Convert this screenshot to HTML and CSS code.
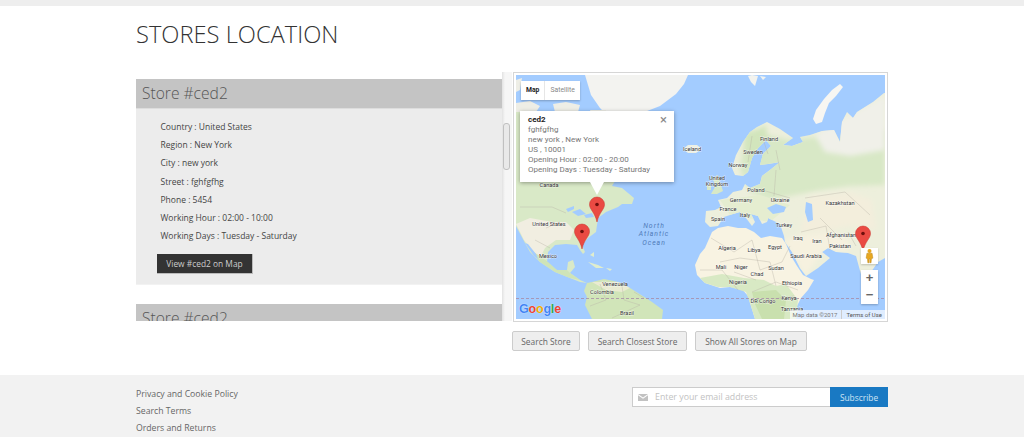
FILE: index.html
```html
<!DOCTYPE html>
<html lang="en">
<head>
<meta charset="utf-8">
<title>Stores Location</title>
<link rel="stylesheet" href="styles.css">
</head>
<body>
<div class="topbar"></div>
<main class="page">
  <h1 class="title">STORES LOCATION</h1>
  <div class="columns">
    <div class="list-wrap">
      <div class="list">
        <section class="store">
          <h2 class="store-head">Store #ced2</h2>
          <div class="store-body">
            <ul class="info">
              <li>Country : United States</li>
              <li>Region : New York</li>
              <li>City : new york</li>
              <li>Street : fghfgfhg</li>
              <li>Phone : 5454</li>
              <li>Working Hour : 02:00 - 10:00</li>
              <li>Working Days : Tuesday - Saturday</li>
            </ul>
            <button class="view-btn" type="button">View #ced2 on Map</button>
          </div>
        </section>
        <section class="store">
          <h2 class="store-head">Store #ced2</h2>
        </section>
      </div>
      <div class="scrollbar"><div class="thumb"></div></div>
    </div>
    <div class="map-col">
      <div class="map-frame">
        <div class="map">
          <svg class="map-svg" viewBox="516 75 369 244" xmlns="http://www.w3.org/2000/svg">
            <defs>
              <filter id="soft" x="-5%" y="-5%" width="110%" height="110%"><feGaussianBlur stdDeviation="0.5"/></filter>
              <filter id="softer" x="-10%" y="-10%" width="120%" height="120%"><feGaussianBlur stdDeviation="2.5"/></filter>
              <clipPath id="eurasia-clip"><path d="M884 93L873 102L857 112L853 118L847 112L842 122L840 142L834 130L822 131L810 135L800 137L803 142L792 146L783 145L793 138L780 129L767 122L757 127L750 132L743 142L736 155L732 168L735 175L743 176L748 172L752 158L758 148L766 140L771 146L763 154L760 165L768 164L780 162L770 170L762 176L760 184L750 188L745 184L742 190L733 192L727 198L718 200L721 207L715 210L706 211L705 222L710 227L718 226L724 217L733 214L740 212L746 218L752 226L755 222L751 214L758 216L762 224L767 222L768 218L780 224L784 236L785 242L792 252L800 268L806 276L818 268L830 258L822 252L828 248L836 252L848 253L856 256L862 278L865 285L871 272L878 262L885 258V93Z"/></clipPath>
            </defs>
            <rect x="516" y="75" width="369" height="244" fill="#a3ccff"/>
            <g filter="url(#soft)">
              <!-- Greenland and arctic islands -->
              <path fill="#f3f3f0" d="M585 75H688L684 84L676 94L660 106L642 113L628 128L612 120L600 108L591 95Z"/>
              <path fill="#eeeee6" d="M516 103L530 101L540 106L536 112H516ZM553 104L566 102L580 105L578 112H555ZM590 110H606V116H592ZM516 80L522 78L520 90L516 92Z"/>
              <path fill="#f3f3ee" d="M752 75L758 76L755 86L751 82L748 76ZM760 76L766 77L763 80Z"/>
              <path fill="#f7f6f2" d="M840 84L843 87L836 96L829 103L825 113L822 122L816 124L813 119L816 110L824 99L832 90Z"/>
              <path fill="#edf0e4" d="M683 149L688 145L697 145L702 149L696 153L688 153Z"/>
              <!-- North America -->
              <path fill="#d9e9c7" d="M516 112H625L622 170L612 186L622 188L634 198L632 204L622 204L618 207L606 212L598 218L596 232L588 238L582 245L585 252L583 254L580 250L577 245L566 244L555 245L548 252L547 262L551 268L557 270L567 270L568 262L573 260L575 267L570 273L580 280L587 283L580 282L570 278L555 272L540 262L530 252L525 243L517 228L516 226Z"/>
              <path fill="#f1eee1" d="M516 224L530 218L552 222L566 222L574 230L570 240L556 240L545 248L540 258L530 248L524 240Z"/>
              <path fill="#cfe4b8" d="M530 250L540 256L548 262L557 270L567 270L570 273L580 280L570 278L555 272L540 262Z"/>
              <path fill="#a3ccff" d="M572 212L580 209L586 214L578 216ZM584 215L592 213L594 217L586 218ZM566 209L574 206L574 209L568 212Z"/>
              <path fill="#a3ccff" d="M525 243L528 244L536 254L538 259L534 256Z"/>
              <path fill="#e0edcd" d="M588 262L598 265L604 268L596 268ZM606 268L612 269L610 271ZM590 255L594 252L594 257Z"/>
              <!-- South America -->
              <path fill="#d1e5b9" d="M587 283L592 282L604 279L618 282L630 288L638 293L652 302L663 310L662 319H592L585 305L587 297L584 291Z"/>
              <path fill="#eaebd2" d="M592 282L618 282L630 288L622 292L606 290Z"/>
              <!-- Africa -->
              <path fill="#f8f3e2" d="M712 232L718 228L728 226L738 228L746 228L754 232L761 238L770 236L782 238L786 244L791 256L797 266L803 275L811 279L814 280L808 290L801 298L797 306L796 319H755L751 306L748 296L742 289L730 287L720 288L705 283L697 275L695 265L700 254L705 248Z"/>
              <path fill="#d8e9c4" d="M700 278L722 274L744 278L764 280L776 286L786 284L792 292L798 300L796 319H755L751 306L746 292L730 287L718 287L705 283Z"/>
              <path fill="#c9e0ae" d="M752 292L776 290L786 300L784 319H762L755 304Z"/>
              <!-- Eurasia -->
              <g clip-path="url(#eurasia-clip)">
                <rect x="700" y="90" width="185" height="200" fill="#edefdc"/>
                <path fill="#d8e8c6" filter="url(#softer)" d="M745 130L790 140L830 135L885 130V185L850 186L820 190L790 196L770 200L750 192L740 170Z"/>
                <path fill="#f0f0e9" filter="url(#softer)" d="M815 135L885 96V150L850 156L825 152Z"/>
                <path fill="#f3eedc" filter="url(#softer)" d="M810 196L850 192L872 200L876 230L850 226L822 232L800 232Z"/>
                <path fill="#f6f1df" filter="url(#softer)" d="M784 240L806 234L830 232L850 240L846 252L825 250L815 262L806 276L796 262Z"/>
                <path fill="#d2e5bc" filter="url(#softer)" d="M746 135L766 125L768 146L756 164L748 166Z"/>
                <path fill="#e5edd0" d="M720 200L760 195L790 205L770 222L730 215Z"/>
              </g>
              <!-- Britain -->
              <path fill="#d8e8c6" d="M713 178L718 175L720 182L723 191L717 194L711 194L715 187ZM707 185L711 184L711 190L707 190Z"/>
              <!-- inland seas -->
              <path fill="#a3ccff" d="M767 208L776 204L786 207L784 212L773 214ZM806 202L812 204L813 220L808 222L805 212Z"/>
              <!-- borders -->
              <g fill="none" stroke="#b8b4a6" stroke-width="0.4">
                <path d="M520 207H552L566 213M535 240L550 248M560 222L546 228"/>
                <path d="M711 238L734 252L752 240L760 270L782 262L790 246M720 262L740 258L770 262L776 286M734 272L756 280M700 270L722 270L738 290"/>
                <path d="M752 292L776 282L798 290M766 300L794 296"/>
                <path d="M776 170L774 196M762 190L790 198M805 198L845 192L870 215M820 218L842 240M801 232L826 226L830 250M848 232L856 246"/>
                <path d="M600 284L606 300L590 306M622 286L624 300L640 305L612 318M634 292L644 298"/>
                <path d="M762 136L768 154M752 136L748 162M776 150L780 170"/>
              </g>
            </g>
            <!-- equator -->
            <line x1="516" y1="298.500" x2="885" y2="298.500" stroke="#a78aa6" stroke-width="0.8" stroke-dasharray="3 2"/>
            <g class="labels">
              <text x="549" y="187">Canada</text>
              <text x="549" y="226">United States</text>
              <text x="548" y="258">Mexico</text>
              <text x="615" y="286">Venezuela</text>
              <text x="602" y="294">Colombia</text>
              <text x="627" y="315">Brazil</text>
              <text x="692" y="151">Iceland</text>
              <text x="769" y="141">Finland</text>
              <text x="753" y="154">Sweden</text>
              <text x="738" y="167">Norway</text>
              <text x="717" y="180">United</text>
              <text x="717" y="186">Kingdom</text>
              <text x="756" y="192">Poland</text>
              <text x="741" y="202">Germany</text>
              <text x="780" y="202">Ukraine</text>
              <text x="728" y="211">France</text>
              <text x="745" y="217">Italy</text>
              <text x="718" y="221">Spain</text>
              <text x="840" y="205">Kazakhstan</text>
              <text x="784" y="227">Turkey</text>
              <text x="798" y="240">Iraq</text>
              <text x="817" y="243">Iran</text>
              <text x="841" y="237">Afghanistan</text>
              <text x="840" y="248">Pakistan</text>
              <text x="727" y="250">Algeria</text>
              <text x="754" y="252">Libya</text>
              <text x="775" y="249">Egypt</text>
              <text x="806" y="258">Saudi Arabia</text>
              <text x="721" y="269">Mali</text>
              <text x="741" y="269">Niger</text>
              <text x="776" y="270">Sudan</text>
              <text x="757" y="276">Chad</text>
              <text x="738" y="284">Nigeria</text>
              <text x="792" y="285">Ethiopia</text>
              <text x="789" y="300">Kenya</text>
              <text x="763" y="303">DR Congo</text>
              <text x="792" y="311">Tanzania</text>
            </g>
            <g class="ocean">
              <text x="654" y="228">North</text>
              <text x="654" y="236">Atlantic</text>
              <text x="654" y="245">Ocean</text>
            </g>
            <g>
              <path fill="#ea4a43" stroke="#c8332c" stroke-width="0.5" d="M597 197a7.500 7.500 0 0 1 7.500 7.500c0 5-5.500 8-7.500 17.500c-2-9.500-7.500-12.500-7.500-17.500a7.500 7.500 0 0 1 7.500-7.500z"/>
              <circle cx="597" cy="204.500" r="1.800" fill="#6e0f0c"/>
              <path fill="#ea4a43" stroke="#c8332c" stroke-width="0.5" d="M582 224a7.500 7.500 0 0 1 7.500 7.500c0 5-5.500 8-7.500 17.500c-2-9.500-7.500-12.500-7.500-17.500a7.500 7.500 0 0 1 7.500-7.500z"/>
              <circle cx="582" cy="231.500" r="1.800" fill="#6e0f0c"/>
              <path fill="#ea4a43" stroke="#c8332c" stroke-width="0.5" d="M863 226a7.500 7.500 0 0 1 7.500 7.500c0 5-5.500 8-7.500 17.500c-2-9.500-7.500-12.500-7.500-17.500a7.500 7.500 0 0 1 7.500-7.500z"/>
              <circle cx="863" cy="233.500" r="1.800" fill="#6e0f0c"/>
            </g>
          </svg>

          <div class="map-type">
            <span class="type-btn type-on">Map</span>
            <span class="type-btn">Satellite</span>
          </div>

          <div class="popup">
            <span class="popup-close">×</span>
            <strong class="popup-name">ced2</strong>
            <p>fghfgfhg</p>
            <p>new york , New York</p>
            <p>US , 10001</p>
            <p>Opening Hour : 02:00 - 20:00</p>
            <p>Opening Days : Tuesday - Saturday</p>
            <span class="popup-tail"></span>
          </div>

          <div class="pegman">
            <svg viewBox="0 0 17 16" width="17" height="16" xmlns="http://www.w3.org/2000/svg">
              <circle cx="8.500" cy="3" r="2" fill="#e8a820"/>
              <path fill="#e8a820" stroke="#b07c10" stroke-width="0.4" d="M5.900 5.200h5.200l.8 5-1.400.3-.4 4.300H8.900V11h-.8v3.800H6.800l-.4-4.300-1.300-.3z"/>
            </svg>
          </div>
          <div class="zoom-box">
            <span class="zoom-btn">+</span>
            <span class="zoom-btn">−</span>
          </div>
          <div class="logo"><b class="g-b">G</b><b class="g-r">o</b><b class="g-y">o</b><b class="g-b">g</b><b class="g-g">l</b><b class="g-r">e</b></div>
          <div class="attrib"><span>Map data ©2017</span><span class="attrib-sep">Terms of Use</span></div>
        </div>
      </div>
      <div class="actions">
        <button class="act-btn act-search" type="button">Search Store</button>
        <button class="act-btn act-closest" type="button">Search Closest Store</button>
        <button class="act-btn act-all" type="button">Show All Stores on Map</button>
      </div>
    </div>
  </div>
</main>
<footer class="footer">
  <div class="footer-in">
    <ul class="links">
      <li>Privacy and Cookie Policy</li>
      <li>Search Terms</li>
      <li>Orders and Returns</li>
    </ul>
    <form class="subscribe">
      <div class="email">
        <svg class="mail" viewBox="0 0 10 7" width="10" height="7" xmlns="http://www.w3.org/2000/svg">
          <path fill="#c2c2c2" d="M0 0h10L5 3.500zM0 1.200l5 3.500 5-3.500V7H0z"/>
        </svg>
        <input class="email-input" type="text" placeholder="Enter your email address">
      </div>
      <button class="sub-btn" type="button">Subscribe</button>
    </form>
  </div>
</footer>
</body>
</html>
```
FILE: styles.css
```css
* { box-sizing: border-box; }
html, body { margin: 0; padding: 0; height: 100%; overflow: hidden; }
body {
  display: flex;
  flex-direction: column;
  background: #fff;
  color: #555;
  font-family: "Open Sans", "Liberation Sans", sans-serif;
  font-size: 8.800px;
}
ul { list-style: none; margin: 0; padding: 0; }
p { margin: 0; }
button { font-family: inherit; cursor: pointer; }

.topbar { height: 6px; background: #eee; flex: none; }

.page { width: 752px; margin: 0 auto; flex: none; }
.title {
  margin: 0;
  height: 66px;
  padding-top: 12px;
  font-size: 23.700px;
  line-height: 33px;
  font-weight: 300;
  color: #333;
}

.columns { display: flex; height: 303px; }

.list-wrap { width: 376px; height: 249px; display: flex; flex: none; overflow: hidden; }
.list { width: 365.500px; padding-top: 7px; overflow: hidden; flex: none; }
.store { margin-bottom: 19px; }
.store-head {
  margin: 0;
  height: 30px;
  padding-left: 6px;
  background: #c4c4c4;
  border-bottom: 1px solid #ddd;
  font-size: 15.600px;
  line-height: 29px;
  font-weight: 300;
  color: #555;
}
.store-body {
  height: 176px;
  padding: 9px 0 0 21px;
  background: #ececec;
  border-bottom: 1px solid #f2f2f2;
}
.info { padding-left: 3.500px; }
.info li { height: 18.200px; line-height: 18.200px; color: #444; font-size: 8.500px; }
.view-btn {
  display: block;
  margin-top: 9px;
  width: 96px;
  height: 19.500px;
  padding: 0;
  background: #333;
  border: 1px solid #bbb;
  border-width: 0 1px 1px 0;
  color: #ccc;
  font-size: 8.400px;
}

.scrollbar {
  width: 10.500px;
  flex: none;
  padding: 51px 2px 0 1px;
  background: linear-gradient(to right, #e2e2e2, #f6f6f6 30%, #f6f6f6);
}
.thumb {
  width: 7px;
  height: 47px;
  background: #e9e9e9;
  border: 1px solid #c0c0c0;
  border-radius: 3px;
}

.map-col { width: 375px; margin-left: 1px; flex: none; }
.map-frame { width: 375px; height: 250px; padding: 2px; border: 1px solid #d6d6d6; background: #fff; }
.map { position: relative; width: 369px; height: 244px; overflow: hidden; background: #a3ccff; }
.map-svg { display: block; width: 369px; height: 244px; }
.labels text {
  font-family: "Roboto", "Liberation Sans", sans-serif;
  font-size: 5.600px;
  fill: #333;
  stroke: #fff;
  stroke-width: 0.8px;
  stroke-opacity: 0.7;
  paint-order: stroke;
  text-anchor: middle;
}
.ocean text {
  font-family: "Roboto", "Liberation Sans", sans-serif;
  font-size: 6.800px;
  font-style: italic;
  letter-spacing: 1px;
  fill: #4f7ab8;
  text-anchor: middle;
}

.map-type {
  position: absolute;
  left: 5px;
  top: 6px;
  display: flex;
  height: 19px;
  background: #fff;
  box-shadow: 0 1px 2px rgba(0, 0, 0, 0.25);
  font-family: "Roboto", "Liberation Sans", sans-serif;
  font-size: 6.800px;
  line-height: 19px;
}
.type-btn { padding: 0 5px; color: #888; }
.type-on { color: #222; font-weight: 700; border-right: 1px solid #e6e6e6; }

.popup {
  position: absolute;
  left: 4px;
  top: 36px;
  width: 154px;
  height: 71px;
  padding: 4px 8px;
  background: #fff;
  box-shadow: 0 1px 4px rgba(0, 0, 0, 0.35);
  font-family: "Roboto", "Liberation Sans", sans-serif;
  font-size: 8px;
  line-height: 10px;
  color: #777;
}
.popup-name { display: block; color: #222; font-weight: 700; }
.popup-close {
  position: absolute;
  right: 7px;
  top: 3px;
  font-size: 13px;
  line-height: 12px;
  color: #888;
}
.popup-tail {
  position: absolute;
  left: 70px;
  top: 71px;
  border-style: solid;
  border-width: 13px 7px 0;
  border-color: #fff transparent transparent;
}

.pegman { position: absolute; left: 345px; top: 173px; width: 17px; height: 16px; background: #fff; box-shadow: 0 1px 2px rgba(0, 0, 0, 0.2); }
.pegman svg { display: block; }
.zoom-box {
  position: absolute;
  left: 345px;
  top: 195px;
  width: 17px;
  height: 34px;
  display: flex;
  flex-direction: column;
  background: #fff;
  box-shadow: 0 1px 2px rgba(0, 0, 0, 0.25);
}
.zoom-btn { height: 17px; line-height: 16px; text-align: center; font-size: 13px; font-weight: 700; color: #666; font-family: "Liberation Sans", sans-serif; }

.logo {
  position: absolute;
  left: 3px;
  top: 226px;
  font-family: "Liberation Sans", sans-serif;
  font-size: 12.500px;
  line-height: 16px;
  letter-spacing: -0.2px;
  text-shadow: 0 0 1px #fff;
}
.logo b { font-weight: 700; }
.g-b { color: #4285f4; }
.g-r { color: #ea4335; }
.g-y { color: #e8ac05; }
.g-g { color: #34a853; }

.attrib {
  position: absolute;
  right: 0;
  bottom: 0;
  display: flex;
  height: 9px;
  padding: 0 3px 0 3px;
  background: rgba(255, 255, 255, 0.65);
  font-family: "Roboto", "Liberation Sans", sans-serif;
  font-size: 6px;
  line-height: 9px;
  color: #777;
}
.attrib-sep { margin-left: 4px; padding-left: 4px; border-left: 1px solid #ccc; color: #555; }

.actions { display: flex; gap: 8px; margin-top: 9px; margin-left: -1px; }
.act-btn {
  height: 20px;
  padding: 0;
  background: #eee;
  border: 1px solid #ccc;
  border-radius: 2px;
  color: #666;
  font-size: 8.400px;
}
.act-search { width: 68px; }
.act-closest { width: 99px; }
.act-all { width: 112px; }

.footer { flex: 1; background: #f2f2f2; }
.footer-in {
  width: 752px;
  margin: 0 auto;
  padding-top: 11px;
  display: flex;
  justify-content: space-between;
  align-items: flex-start;
}
.links li { height: 17px; line-height: 17px; color: #666; font-size: 8.700px; }
.subscribe { display: flex; width: 256px; height: 20px; margin-top: 1px; }
.email {
  flex: 1;
  display: flex;
  align-items: center;
  gap: 7px;
  padding-left: 5px;
  background: #fff;
  border: 1px solid #ccc;
  border-right: 0;
}
.mail { flex: none; }
.email-input {
  flex: 1;
  min-width: 0;
  border: 0;
  padding: 0;
  outline: 0;
  background: transparent;
  font-family: inherit;
  font-size: 8.800px;
  color: #666;
}
.email-input::placeholder { color: #c2c2c2; opacity: 1; }
.sub-btn {
  width: 58px;
  padding: 0;
  background: #1979c3;
  border: 0;
  color: #cfe4f5;
  font-size: 8.400px;
}
```
